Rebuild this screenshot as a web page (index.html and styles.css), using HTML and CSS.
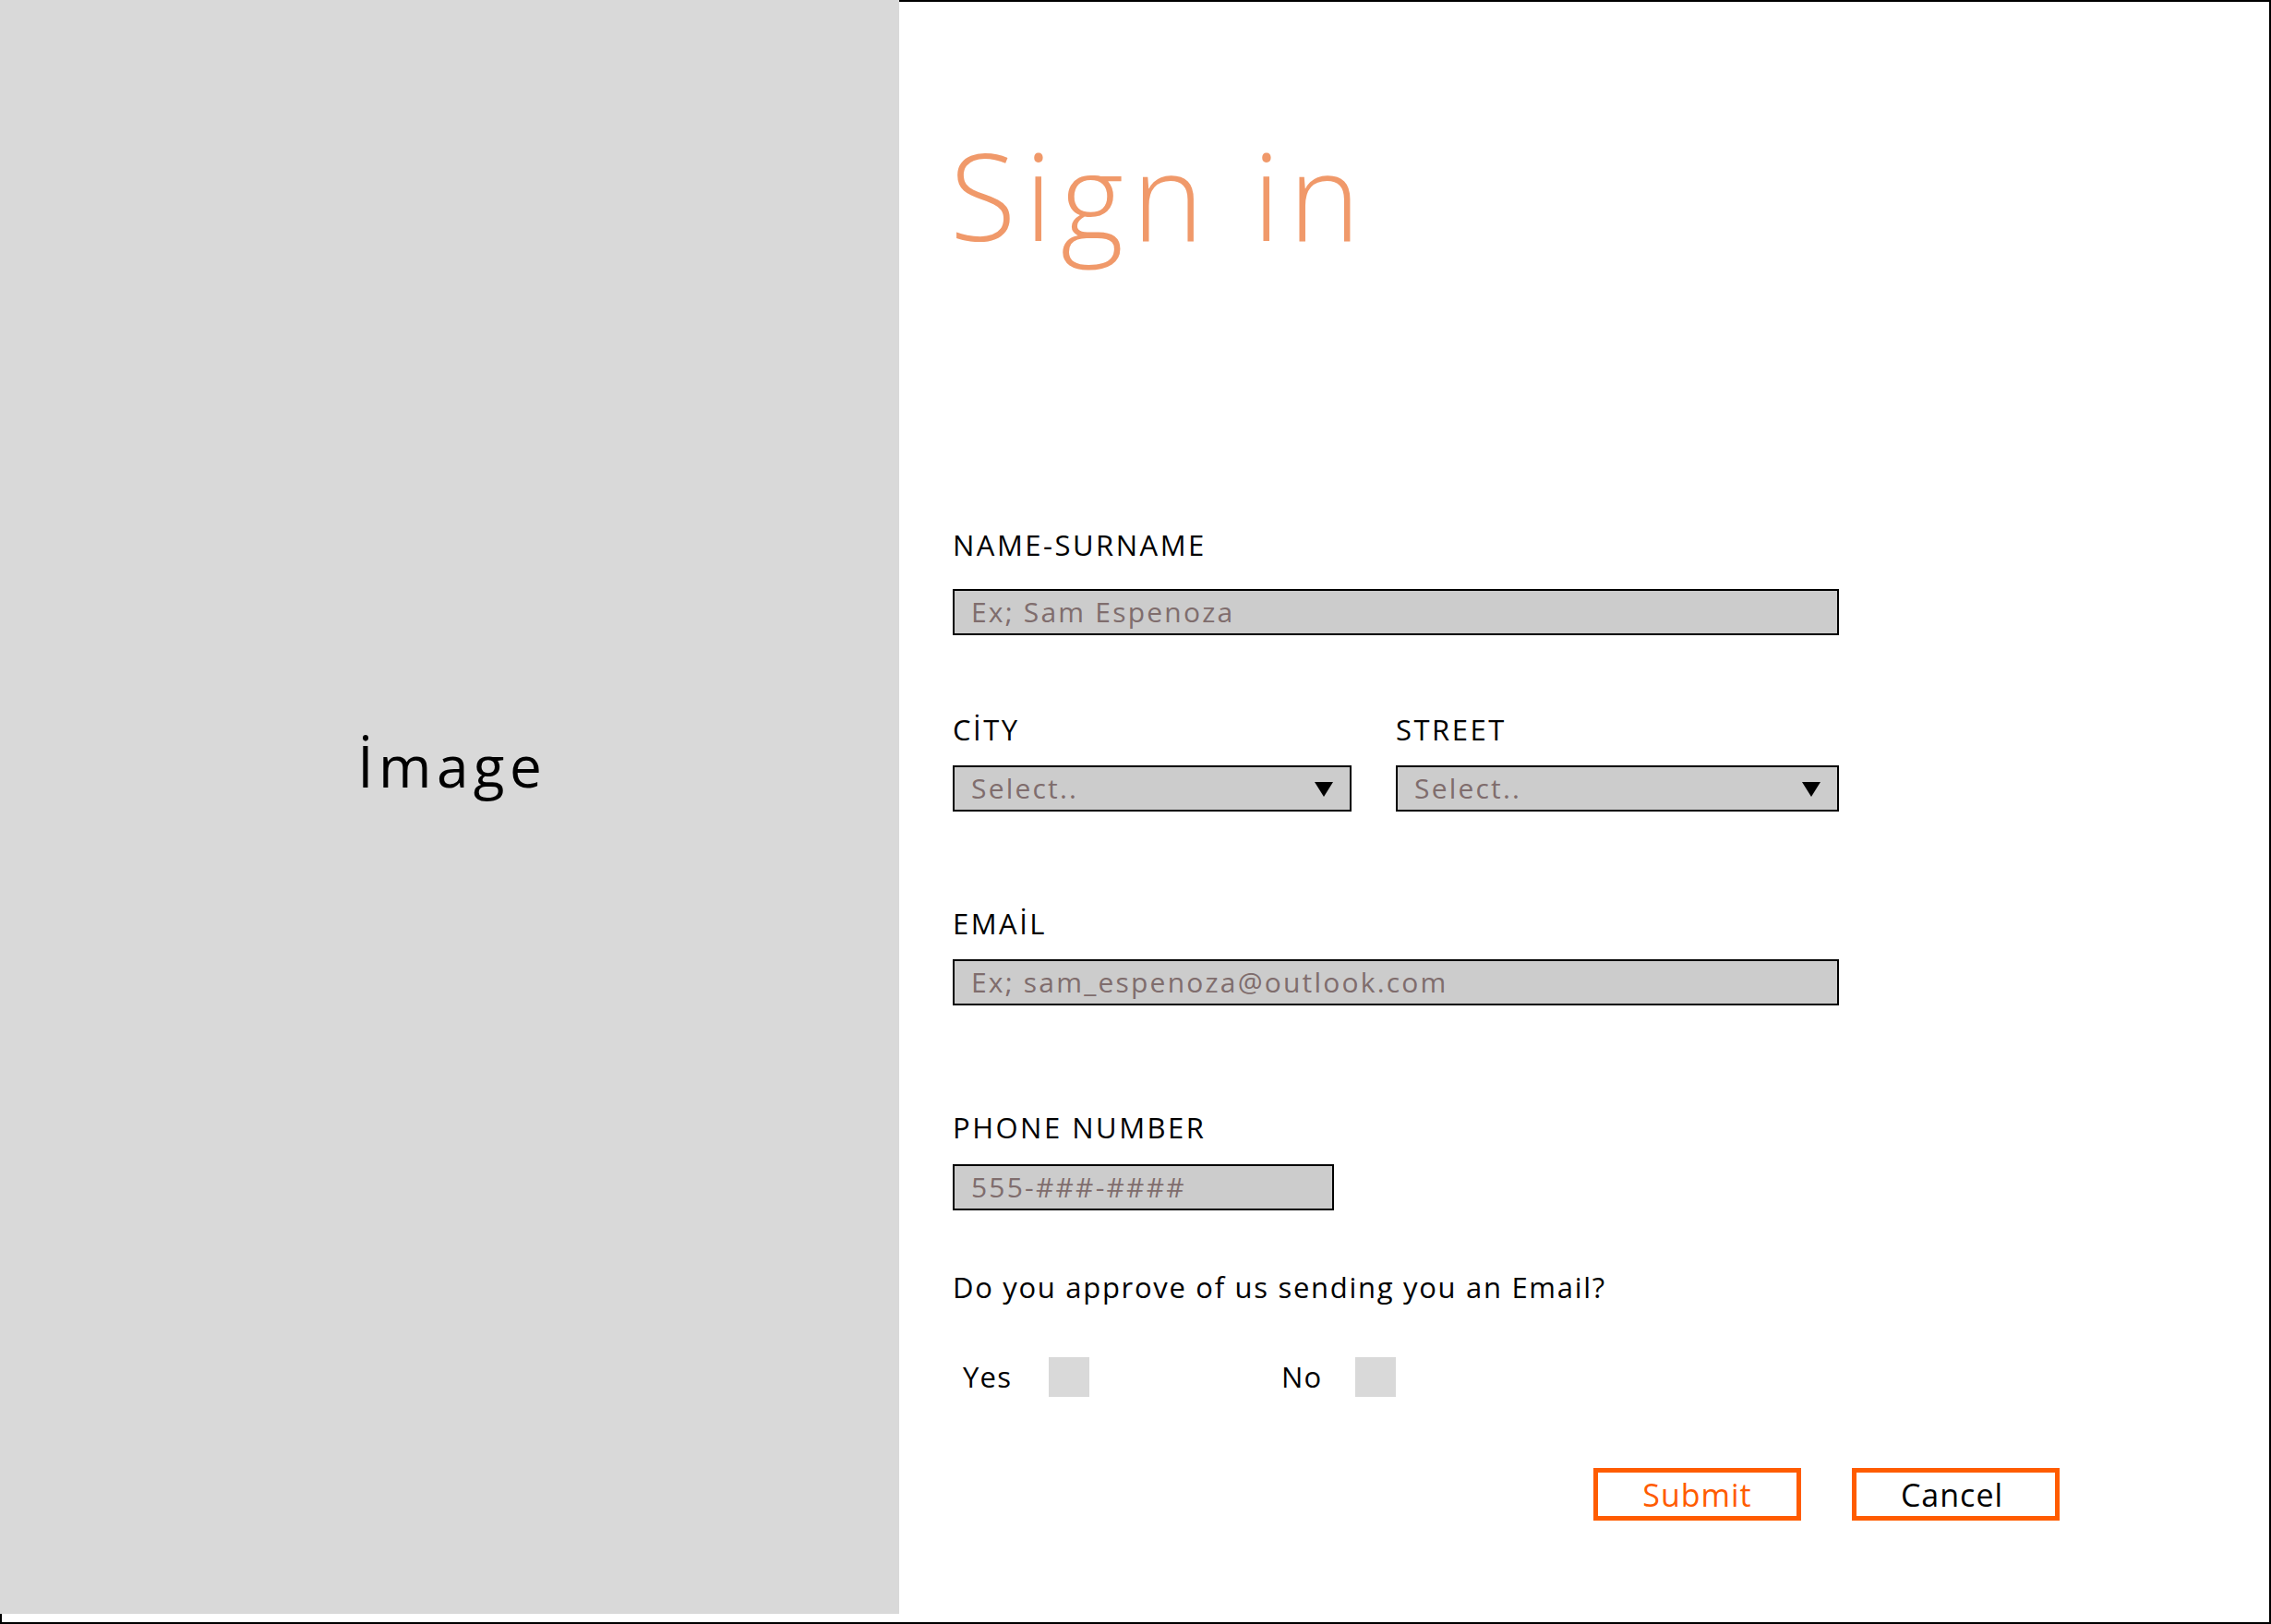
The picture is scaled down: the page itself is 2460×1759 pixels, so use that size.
FILE: index.html
```html
<!DOCTYPE html>
<html lang="en">
<head>
<meta charset="utf-8">
<title>Sign in</title>
<link rel="stylesheet" href="styles.css">
</head>
<body>
<div class="frame">
  <aside class="image-panel"><span class="image-label">İmage</span></aside>
  <main class="form-area">
    <h1 class="title">Sign in</h1>
    <form class="form">
      <label class="label label-name">NAME-SURNAME</label>
      <div class="input input-name"><span class="ph">Ex; Sam Espenoza</span></div>

      <div class="row row-addr">
        <div class="col col-city">
          <label class="label">CİTY</label>
          <div class="input select"><span class="ph">Select..</span>
            <svg class="caret" width="20" height="16" viewBox="0 0 20 16"><polygon points="0,0 20,0 10,16" fill="#000"/></svg>
          </div>
        </div>
        <div class="col col-street">
          <label class="label">STREET</label>
          <div class="input select"><span class="ph">Select..</span>
            <svg class="caret" width="20" height="16" viewBox="0 0 20 16"><polygon points="0,0 20,0 10,16" fill="#000"/></svg>
          </div>
        </div>
      </div>

      <label class="label label-email">EMAİL</label>
      <div class="input input-email"><span class="ph">Ex; sam_espenoza@outlook.com</span></div>

      <label class="label label-phone">PHONE NUMBER</label>
      <div class="input input-phone"><span class="ph">555-###-####</span></div>

      <p class="question">Do you approve of us sending you an Email?</p>

      <div class="options">
        <span class="opt-text opt-yes">Yes</span>
        <span class="check"></span>
        <span class="opt-text opt-no">No</span>
        <span class="check"></span>
      </div>

      <div class="buttons">
        <button type="button" class="btn btn-submit">Submit</button>
        <button type="button" class="btn btn-cancel">Cancel</button>
      </div>
    </form>
  </main>
</div>
</body>
</html>
```
FILE: styles.css
```css
* { box-sizing: border-box; }
html, body { margin: 0; padding: 0; background: #fff; }
body { font-family: "Open Sans", "Liberation Sans", sans-serif; color: #000; }

.frame {
  width: 2460px;
  height: 1759px;
  border: 2px solid #000;
  display: flex;
}

.image-panel {
  width: 974px;
  height: 1748px;
  margin: -2px 0 0 -2px;
  background: #d9d9d9;
  display: flex;
  align-items: center;
  justify-content: center;
  padding-bottom: 80px;
  flex-shrink: 0;
}
.image-label {
  font-size: 62px;
  line-height: 1;
  letter-spacing: 5.5px;
  margin-right: -5.5px;
  font-weight: 400;
  margin-top: -10px;
}

.form-area {
  flex: 1;
  padding: 143px 0 0 58px;
  display: flex;
  flex-direction: column;
}

.title {
  margin: 0 0 0 -3px;
  font-size: 131px;
  line-height: 130px;
  font-weight: 300;
  color: #f0996a;
  letter-spacing: 9.5px;
}

.form { display: flex; flex-direction: column; align-items: flex-start; }

.label {
  display: block;
  font-size: 31px;
  line-height: 31px;
  letter-spacing: 2.5px;
  margin-top: 0;
}
.label-name { margin-top: 299.5px; }
.label-email { margin-top: 105.5px; }
.label-phone { margin-top: 116.5px; }

.input {
  height: 50px;
  background: #cccccc;
  border: 2px solid #000;
  display: flex;
  align-items: center;
  padding-left: 18px;
}
.input-name { width: 960px; margin-top: 32.5px; }
.input-email { width: 960px; margin-top: 23.5px; }
.input-phone { width: 413px; margin-top: 24.5px; }

.ph {
  font-size: 30px;
  line-height: 1;
  color: #7f6d6d;
  letter-spacing: 2.2px;
}

.row-addr { display: flex; gap: 48px; margin-top: 86.5px; }
.col-city { width: 432px; }
.col-street { width: 480px; }
.select { margin-top: 23.5px; width: 100%; justify-content: space-between; padding-right: 18px; }
.caret { display: block; margin-top: 1px; }

.question {
  margin: 67.5px 0 0 0;
  font-size: 31px;
  line-height: 31px;
  letter-spacing: 1.7px;
}

.options {
  margin-top: 60.5px;
  height: 43px;
  display: flex;
  align-items: center;
}
.opt-text { font-size: 31px; line-height: 31px; letter-spacing: 1.2px; }
.opt-yes { margin-left: 11px; width: 93px; }
.opt-no { margin-left: 208px; width: 80px; }
.check { width: 44px; height: 43px; background: #d9d9d9; }

.buttons {
  margin: 77px 0 0 694px;
  display: flex;
  gap: 55px;
}
.btn {
  width: 225px;
  height: 57px;
  border: 5px solid #ff5c00;
  background: #fff;
  font-family: "Open Sans", "Liberation Sans", sans-serif;
  font-size: 34px;
  line-height: 1;
  padding: 0;
  display: flex;
  align-items: center;
  justify-content: center;
  letter-spacing: 1px;
}
.btn-submit { color: #ff5c00; }
.btn-cancel { color: #000; padding-right: 8px; }
```
